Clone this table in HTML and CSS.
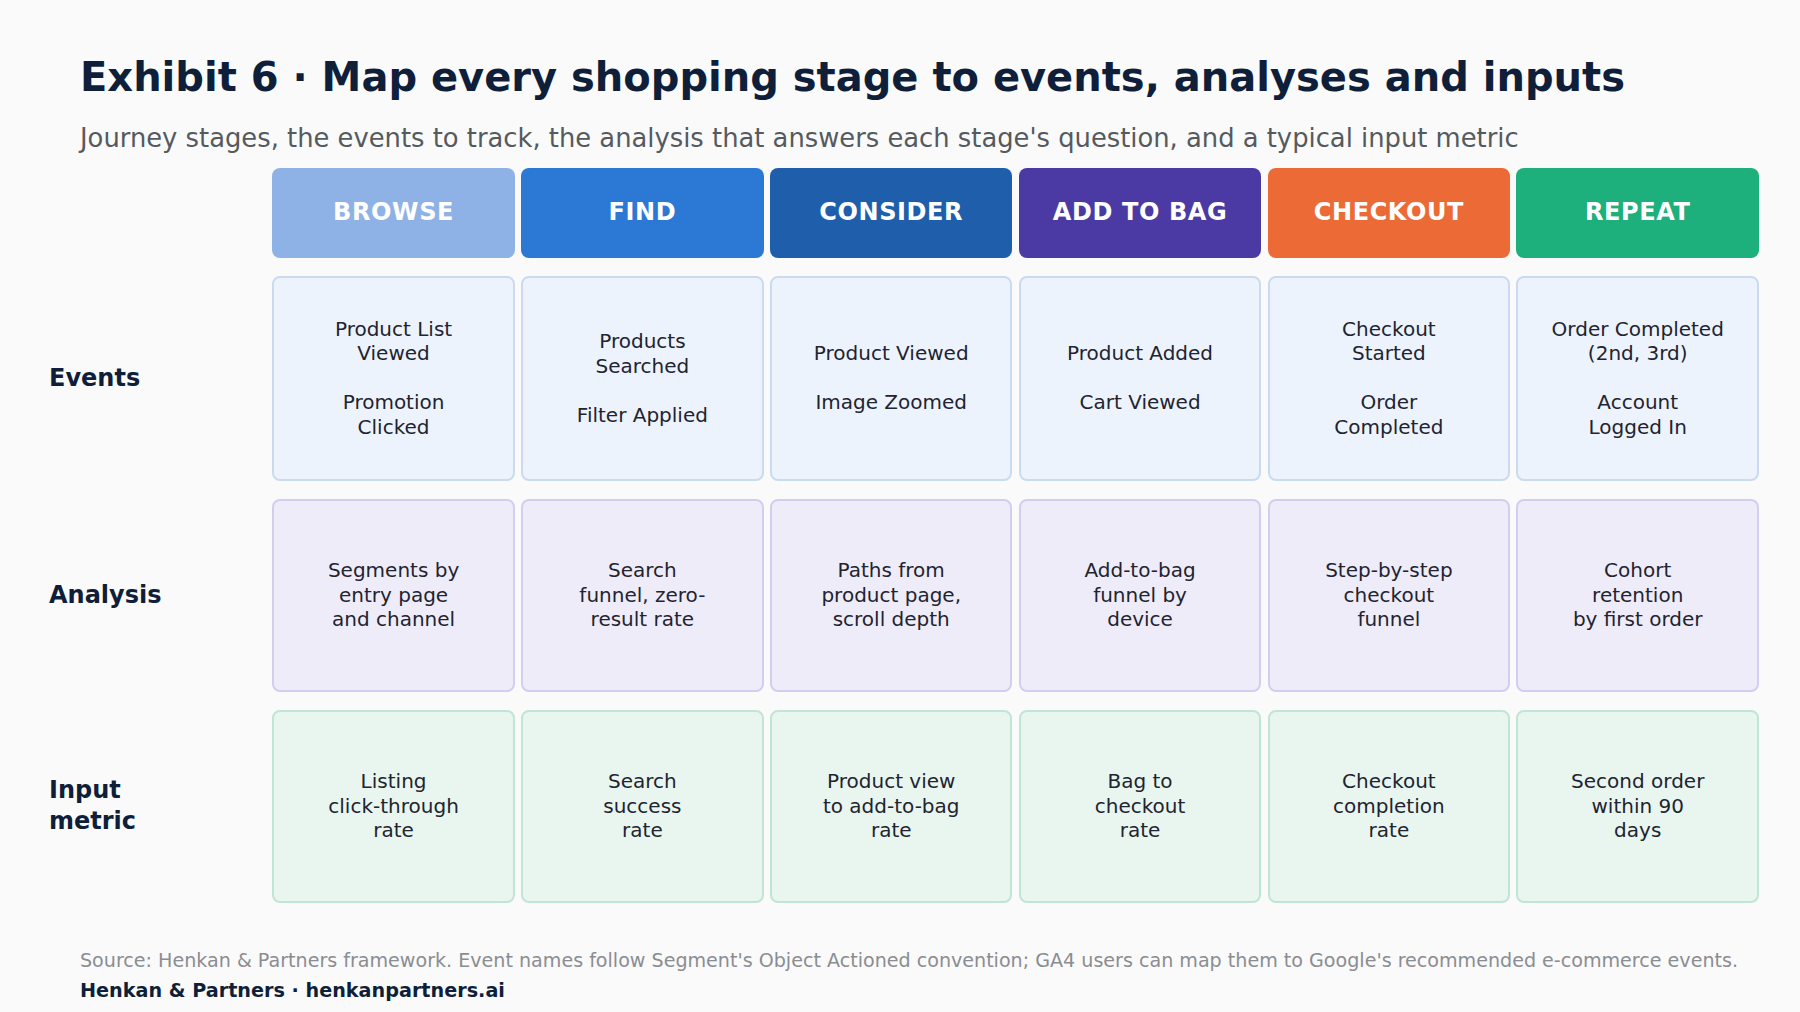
FILE: index.html
```html
<!DOCTYPE html>
<html lang="en">
<head>
    <meta charset="UTF-8">
    <meta name="viewport" content="width=device-width, initial-scale=1.0">
    <title>Exhibit 6 · Shopping stage map</title>
    <link rel="stylesheet" href="styles.css">
</head>
<body>
    <div class="page">
        <h1 class="title">Exhibit 6 · Map every shopping stage to events, analyses and inputs</h1>
        <p class="subtitle">Journey stages, the events to track, the analysis that answers each stage's question, and a typical input metric</p>

        <div class="matrix">
            <!-- stage headers -->
            <div class="corner"></div>
            <div class="stage browse">BROWSE</div>
            <div class="stage find">FIND</div>
            <div class="stage consider">CONSIDER</div>
            <div class="stage bag">ADD TO BAG</div>
            <div class="stage checkout">CHECKOUT</div>
            <div class="stage repeat">REPEAT</div>

            <!-- events -->
            <div class="row-label">Events</div>
            <div class="cell events">Product List<br>Viewed<br><br>Promotion<br>Clicked</div>
            <div class="cell events">Products<br>Searched<br><br>Filter Applied</div>
            <div class="cell events">Product Viewed<br><br>Image Zoomed</div>
            <div class="cell events">Product Added<br><br>Cart Viewed</div>
            <div class="cell events">Checkout<br>Started<br><br>Order<br>Completed</div>
            <div class="cell events">Order Completed<br>(2nd, 3rd)<br><br>Account<br>Logged In</div>

            <!-- analysis -->
            <div class="row-label">Analysis</div>
            <div class="cell analysis">Segments by<br>entry page<br>and channel</div>
            <div class="cell analysis">Search<br>funnel, zero-<br>result rate</div>
            <div class="cell analysis">Paths from<br>product page,<br>scroll depth</div>
            <div class="cell analysis">Add-to-bag<br>funnel by<br>device</div>
            <div class="cell analysis">Step-by-step<br>checkout<br>funnel</div>
            <div class="cell analysis">Cohort<br>retention<br>by first order</div>

            <!-- input metric -->
            <div class="row-label">Input<br>metric</div>
            <div class="cell metric">Listing<br>click-through<br>rate</div>
            <div class="cell metric">Search<br>success<br>rate</div>
            <div class="cell metric">Product view<br>to add-to-bag<br>rate</div>
            <div class="cell metric">Bag to<br>checkout<br>rate</div>
            <div class="cell metric">Checkout<br>completion<br>rate</div>
            <div class="cell metric">Second order<br>within 90<br>days</div>
        </div>

        <p class="source">Source: Henkan &amp; Partners framework. Event names follow Segment's Object Actioned convention; GA4 users can map them to Google's recommended e-commerce events.</p>
        <p class="credit">Henkan &amp; Partners · henkanpartners.ai</p>
    </div>
</body>
</html>
```

FILE: styles.css
```css
*, :after, :before {
    margin: 0;
    padding: 0;
    box-sizing: border-box;
}
html, body {
    height: 100%;
}
body {
    background: #fafafa;
    font-family: "DejaVu Sans", "Liberation Sans", sans-serif;
    color: #1f2430;
    -webkit-font-smoothing: antialiased;
}
.page {
    width: 1800px;
    padding: 54px 41px 0 49px;
}
.title {
    padding-left: 31px;
    font-size: 40px;
    font-weight: 700;
    line-height: 47px;
    color: #0f1f3a;
}
.subtitle {
    margin-top: 22px;
    padding-left: 31px;
    font-size: 25.8px;
    line-height: 30px;
    color: #555a60;
}

/* 表格：标签列 + 6 个阶段 */
.matrix {
    display: grid;
    grid-template-columns: 217px repeat(6, 1fr);
    grid-template-rows: 89.5px 205px 193px 193px;
    column-gap: 6.3px;
    row-gap: 18px;
    margin-top: 15px;
    width: 1710px;
}
.stage {
    display: flex;
    align-items: center;
    justify-content: center;
    padding-bottom: 1px;
    border-radius: 8px;
    color: #fff;
    font-size: 24px;
    font-weight: 700;
    letter-spacing: .6px;
}
.stage.browse { background: #8fb2e6; }
.stage.find { background: #2b78d5; }
.stage.consider { background: #1f5eaa; }
.stage.bag { background: #4b3aa4; }
.stage.checkout { background: #eb6a36; }
.stage.repeat { background: #1db07c; }

.row-label {
    display: flex;
    align-items: center;
    font-size: 24px;
    font-weight: 700;
    line-height: 31px;
    color: #0f1f3a;
}
.cell {
    display: flex;
    align-items: center;
    justify-content: center;
    border: 2px solid;
    border-radius: 8px;
    text-align: center;
    font-size: 20px;
    line-height: 24.5px;
    color: #1f2430;
}
.cell.events {
    background: #edf3fc;
    border-color: #cadaf0;
}
.cell.analysis {
    background: #efecf9;
    border-color: #d4cdef;
}
.cell.metric {
    background: #e8f6ef;
    border-color: #c0e5d5;
}

.source {
    margin-top: 47px;
    padding-left: 31px;
    font-size: 19.1px;
    line-height: 22px;
    color: #8a8d92;
}
.credit {
    margin-top: 8px;
    padding-left: 31px;
    font-size: 19.2px;
    font-weight: 700;
    line-height: 22px;
    color: #0f1f3a;
}
```
